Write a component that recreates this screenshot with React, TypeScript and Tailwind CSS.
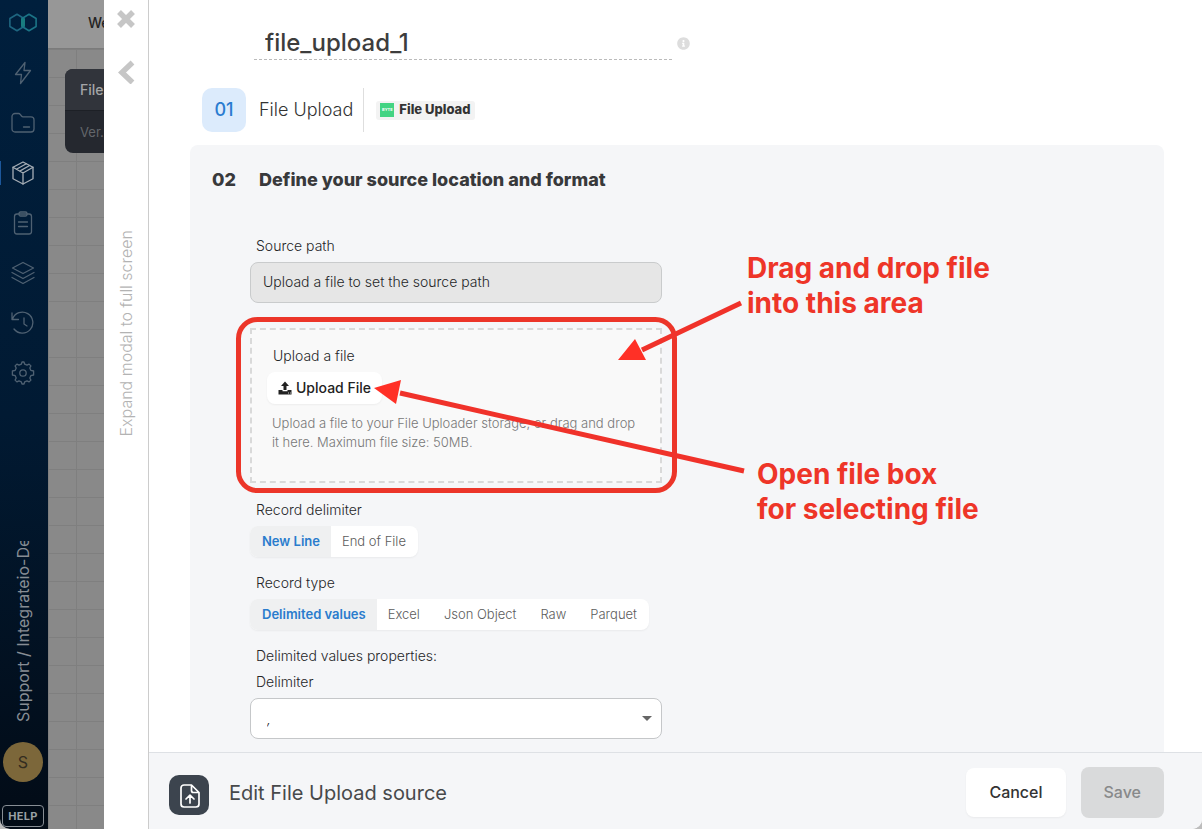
import { useState } from 'react';
import type { ReactNode } from 'react';
import { FaInfoCircle } from 'react-icons/fa';

interface NavItem {
  label: string;
  icon: ReactNode;
}

const NAV_ITEMS: NavItem[] = [
  {
    label: 'Connections',
    icon: <path d="M14 1.5 4.5 13.5h6L9.5 22.5 19.5 9.5h-6.5z" />,
  },
  {
    label: 'Files',
    icon: (
      <>
        <path d="M1 5.5a3 3 0 0 1 3-3h3.6a2 2 0 0 1 1.6.8l1.3 1.7a2 2 0 0 0 1.6.8H20a3 3 0 0 1 3 3v9.2a3 3 0 0 1-3 3H4a3 3 0 0 1-3-3z" />
        <path d="M12.500 16h6" />
      </>
    ),
  },
  {
    label: 'Packages',
    icon: (
      <>
        <path d="M12 1 22 6.300v11.400L12 23 2 17.700V6.300z" />
        <path d="M2 6.300 12 12l10-5.700M12 12v11M5.400 8.200 15.300 2.800M8.700 10.100 18.600 4.500" />
      </>
    ),
  },
  {
    label: 'Jobs',
    icon: (
      <>
        <rect x="3.500" y="3" width="17" height="20" rx="2.500" />
        <rect x="8" y="1" width="8" height="4" rx="1.500" />
        <path d="M7.500 11h9M7.500 15.500h9" />
      </>
    ),
  },
  {
    label: 'Schedules',
    icon: (
      <>
        <path d="M12 1.500 22.500 7 12 12.500 1.500 7z" />
        <path d="m1 11.500 11 6 11-6M1 16.500l11 6 11-6" />
      </>
    ),
  },
  {
    label: 'History',
    icon: (
      <>
        <path d="M1 2v6.500h6.500M1.500 8A10.500 10.500 0 1 1 3 18" />
        <path d="M13 7v6l3 2" />
      </>
    ),
  },
  {
    label: 'Settings',
    icon: (
      <>
        <path d="M10.300 3.200 11 1h2l.7 2.200 2.300 1 2.100-1.100 1.800 1.800-1.100 2.100 1 2.300 2.800.7v4l-2.800.7-1 2.300 1.100 2.100-1.800 1.800-2.100-1.100-2.300 1L13 23h-2l-.7-2.200-2.300-1-2.100 1.100-1.800-1.800L5.200 17l-1-2.300L1.400 14v-4l2.800-.7 1-2.300-1.100-2.100 1.800-1.800L8 4.200z" />
        <circle cx="12" cy="12" r="3.200" />
      </>
    ),
  },
];

function Sidebar() {
  return (
    <aside className="flex w-12 shrink-0 flex-col items-center bg-linear-to-b from-[#001f3d] via-[#011a33] to-[#020b16] pr-0.5">
      <a href="#" aria-label="Home" className="mt-2.5">
        <svg width="28" height="24" viewBox="0 0 28 24" fill="none" strokeWidth="1.600" strokeLinejoin="round">
          <path d="M.9 8.500 8 4.200l7 4.300v8L8 20.800.9 16.500z" stroke="#1e6680" />
          <path d="m13 8.500 7-4.300 7.100 4.300v8L20 20.800l-7-4.300z" stroke="#1b7486" />
          <path d="M13 8.500v8M15 8.500v8" stroke="#1a8582" />
        </svg>
      </a>
      <nav className="mt-[27px] flex flex-col gap-[26px]">
        {NAV_ITEMS.map((item) => (
          <a
            key={item.label}
            href="#"
            aria-label={item.label}
            className={item.label === 'Packages' ? 'relative text-[#a5adb5]' : 'relative text-[#4f6172]'}
          >
            {item.label === 'Packages' && <span className="absolute top-0 -left-[11px] h-6 w-px bg-[#1c579b]" />}
            <svg width="24" height="24" viewBox="0 0 24 24" fill="none" stroke="currentColor" strokeWidth="1.300" strokeLinecap="round" strokeLinejoin="round">
              {item.icon}
            </svg>
          </a>
        ))}
      </nav>
      <div className="mt-auto h-[181px] rotate-180 overflow-hidden text-base leading-5 whitespace-nowrap text-[#878d94] [writing-mode:vertical-rl]">
        Support / Integrateio-De
      </div>
      <div className="mt-5 flex size-10 items-center justify-center rounded-full bg-[#7c673a] text-base text-[#332c20]">S</div>
      <button className="mt-[23px] mb-0.5 h-[22px] w-[42px] rounded border border-[#878d94] text-[11px] font-bold tracking-wide text-[#9aa0a5]">
        HELP
      </button>
    </aside>
  );
}

function Canvas() {
  return (
    <div className="flex w-14 shrink-0 flex-col overflow-hidden bg-[#898989]">
      <div className="flex h-[49px] shrink-0 items-center border-b border-[#7b7b7b] bg-[#979797] pb-0.5 pl-10 text-sm font-medium text-[#232323]">
        We
      </div>
      <div className="flex-1 bg-[linear-gradient(#7f7f7f_1px,transparent_1px),linear-gradient(90deg,#7f7f7f_1px,transparent_1px)] bg-size-[28px_28px] pt-5 pl-[17px]">
        <div className="w-40 overflow-hidden rounded-[8px] bg-[#25282f] text-sm">
          <div className="h-[42px] border-b border-[#1d2026] bg-[#31343b] pl-[15px] leading-[42px] font-medium text-[#a4a5a7]">File</div>
          <div className="h-[42px] pl-[15px] text-[13px] leading-[42px] text-[#63666b]">Ver.</div>
        </div>
      </div>
    </div>
  );
}

function ModalRail() {
  return (
    <div className="flex w-[45px] shrink-0 flex-col items-center border-r border-[#cccccc] bg-white text-[#c6c6c6]">
      <button aria-label="Close" className="mt-2.5">
        <svg width="18" height="18" viewBox="0 0 18 18" fill="none" stroke="currentColor" strokeWidth="5.500">
          <path d="m2 2 14 14M16 2 2 16" />
        </svg>
      </button>
      <button aria-label="Back" className="mt-8">
        <svg width="18" height="24" viewBox="0 0 18 24" fill="none" stroke="currentColor" strokeWidth="5.500">
          <path d="M15.500 2.500 5 12.500l10.500 10" />
        </svg>
      </button>
      <button className="mt-[146px] rotate-180 text-base leading-5 font-light whitespace-nowrap text-[#b3b3b3] [writing-mode:vertical-rl]">
        Expand modal to full screen
      </button>
    </div>
  );
}

interface ToggleProps {
  label: string;
  options: string[];
}

function ToggleGroup({ label, options }: ToggleProps) {
  const [selected, setSelected] = useState(options[0]);

  return (
    <div>
      <p className="pl-1.5 leading-5">{label}</p>
      <div role="group" aria-label={label} className="mt-1.5 inline-flex h-[31px] overflow-hidden rounded-[8px] bg-white align-top text-[13px] shadow-xs">
        {options.map((option) => (
          <button
            key={option}
            aria-pressed={option === selected}
            onClick={() => setSelected(option)}
            className={
              option === selected
                ? 'bg-[#eff0f1] pr-[11px] pl-3 font-semibold text-[#2a7ccd]'
                : 'px-3 font-light text-[#5c5c5c] first:pl-3 nth-2:pl-[11px]'
            }
          >
            {option}
          </button>
        ))}
      </div>
    </div>
  );
}

// Red frame, arrows and notes laid over the upload area
function Callouts() {
  return (
    <div className="pointer-events-none absolute -top-0.5 -left-0.5 text-[28px] leading-[35px] font-bold whitespace-nowrap text-[#ee3528]">
      <svg width="500" height="180" viewBox="0 0 500 180" fill="none" className="overflow-visible">
        <rect x="-11.500" y="-8.500" width="436" height="171" rx="19" stroke="#ec3529" strokeWidth="5" />
        <path d="M491-25 392 22M494 143 150 65" stroke="#f0322a" strokeWidth="5" />
        <path d="m368 32 17-21 11 21zM124 60l27-8-5 24z" fill="#ff3026" />
      </svg>
      <p className="absolute -top-[77px] left-[497px]">
        Drag and drop file
        <br />
        into this area
      </p>
      <p className="absolute top-[129px] left-[507px]">
        Open file box
        <br />
        for selecting file
      </p>
    </div>
  );
}

function UploadArea() {
  return (
    <div className="relative mt-[25px] mb-[17px] border-2 border-dashed border-[#d9d9d9] bg-[#f9f9f9] px-[15px] pt-4 pb-[29px]">
      <p className="pl-1.5 leading-5">Upload a file</p>
      <button className="mt-1.5 flex h-8 items-center gap-1 rounded-[8px] bg-white px-[11px] font-medium text-[#222222] shadow-xs">
        <svg width="14" height="14" viewBox="0 0 14 14" fill="currentColor">
          <path d="M7 .5 11 5H8.500v4h-3V5H3z" />
          <path d="M.5 9h4v1.200h5V9h4v4.500H.5z" />
          <path d="M10 12h.8M12 12h.7" stroke="white" />
        </svg>
        Upload File
      </button>
      <p className="mt-2.5 pl-[5px] text-[13px] leading-[19px] font-light text-[#777777]">
        Upload a file to your File Uploader storage, or drag and drop it here. Maximum file size: 50MB.
      </p>
      <Callouts />
    </div>
  );
}

function SourceForm() {
  return (
    <section className="mt-[13px] min-h-[640px] rounded-[8px] bg-[#f5f6f8] pt-[23px]">
      <h2 className="flex pl-[22px] text-lg leading-6 font-extrabold text-[#38393b]">
        <span className="w-[47px]">02</span>
        Define your source location and format
      </h2>
      <form className="mt-11 ml-15 flex max-w-[412px] flex-col text-sm font-light text-[#252628]" onSubmit={(e) => e.preventDefault()}>
        <label htmlFor="path" className="block pl-1.5 leading-5">
          Source path
        </label>
        <input
          id="path"
          readOnly
          value="Upload a file to set the source path"
          className="mt-1.5 block h-[41px] w-full rounded-[8px] border border-[#c9cbcc] bg-[#e6e6e6] px-3 pb-0.5"
        />
        <UploadArea />
        <div className="flex flex-col gap-4">
          <ToggleGroup label="Record delimiter" options={['New Line', 'End of File']} />
          <ToggleGroup label="Record type" options={['Delimited values', 'Excel', 'Json Object', 'Raw', 'Parquet']} />
        </div>
        <p className="mt-4 pl-1.5 leading-5">Delimited values properties:</p>
        <label htmlFor="delimiter" className="mt-1.5 block pl-1.5 leading-5">
          Delimiter
        </label>
        <div className="relative mt-1.5">
          <select id="delimiter" className="block h-[41px] w-full appearance-none rounded-[8px] border border-[#c5c7c9] bg-white px-4 text-sm italic">
            <option>,</option>
          </select>
          <svg width="10" height="5" viewBox="0 0 10 5" className="absolute top-[18px] right-2.5 fill-[#666666]">
            <path d="M0 0h10L5 5z" />
          </svg>
        </div>
      </form>
    </section>
  );
}

function Footer() {
  return (
    <footer className="flex h-[77px] shrink-0 items-center border-t border-[#dee1e5] bg-[#f5f6f8] pr-[38px] pl-5">
      <div className="mt-2 flex size-10 items-center justify-center rounded-[10px] bg-[#3c444e]">
        <svg width="24" height="26" viewBox="0 0 24 26" fill="none" stroke="white" strokeWidth="1.700" strokeLinecap="round" strokeLinejoin="round" className="translate-x-px translate-y-px">
          <path d="M13.500 2H6a3 3 0 0 0-3 3v16a3 3 0 0 0 3 3h12a3 3 0 0 0 3-3V9.500zM13.500 2v5.500a2 2 0 0 0 2 2H21M12 20v-7.500M8 16l4-3.800 4 3.800" />
        </svg>
      </div>
      <h1 className="mt-1 ml-5 text-xl text-[#47494b]">Edit File Upload source</h1>
      <button className="mt-0.5 ml-auto h-[49px] rounded-[8px] bg-white px-[23px] text-base font-medium text-[#333333] shadow-xs">Cancel</button>
      <button disabled className="mt-0.5 ml-[15px] h-[51px] rounded-[8px] bg-[#d9dadb] px-[23px] text-base font-medium text-[#88898a]">
        Save
      </button>
    </footer>
  );
}

export default function App() {
  const [name, setName] = useState('file_upload_1');

  return (
    <div className="h-screen bg-[#bdbdbd] font-['Inter',sans-serif]">
      <div className="flex h-full overflow-hidden rounded-b-[10px] bg-white">
        <Sidebar />
        <Canvas />
        <ModalRail />
        <main className="flex min-w-0 flex-1 flex-col">
          <div className="min-h-0 flex-1 overflow-hidden pt-[26px] pr-[38px] pl-[41px]">
            <div className="ml-16 flex items-center gap-[5px]">
              <input
                aria-label="Component name"
                value={name}
                onChange={(e) => setName(e.target.value)}
                className="h-[34px] w-[418px] border-b border-dashed border-[#bbbbbb] px-[11px] text-2xl font-medium text-[#3d3d3d]"
              />
              <FaInfoCircle size={13} className="text-[#dddddd]" />
            </div>
            <div className="mt-7 ml-3 flex h-11 items-center">
              <div className="flex size-11 items-center justify-center rounded-[10px] bg-[#dcebfc] text-lg font-medium text-[#2a7cd0]">01</div>
              <h2 className="ml-[13px] text-lg font-light text-[#333333]">File Upload</h2>
              <div className="ml-2.5 h-full w-px bg-[#dedede]" />
              <div className="ml-3 flex h-[19px] items-center gap-[5px] rounded-[3px] bg-[#f3f3f3] px-1 text-[13px] font-extrabold text-[#333333]">
                <span className="flex size-3.5 items-center justify-center bg-[#43d483] text-[4px] font-bold text-white">BYTE</span>
                File Upload
              </div>
            </div>
            <SourceForm />
          </div>
          <Footer />
        </main>
      </div>
    </div>
  );
}
